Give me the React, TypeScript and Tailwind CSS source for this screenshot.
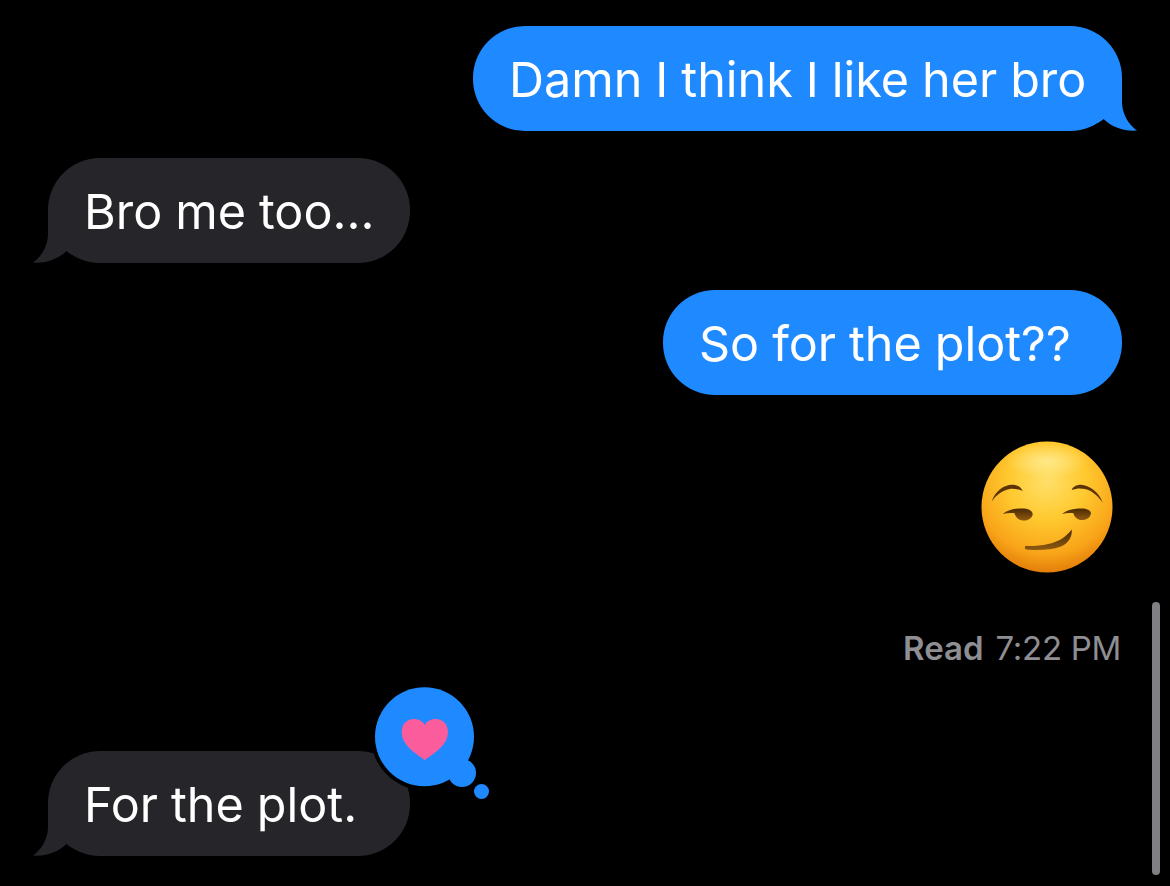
const FONT = 'font-["Inter","Liberation_Sans",sans-serif]';

function Tail({ color, side }: { color: string; side: 'left' | 'right' }) {
  return (
    <svg
      viewBox="0 0 40 50"
      className={`absolute bottom-0 h-[50px] w-[40px] ${side === 'left' ? 'left-[-15px]' : 'right-[-15px] -scale-x-100'}`}
      fill={color}
    >
      <path d="M15 0 L15 22 C14.5 34 8 44 0 49.5 C12 50.5 24 47 33.5 38 C36 40 38 41.5 40 42 L40 0 Z" />
    </svg>
  );
}

function Bubble({
  text,
  width,
  sent,
  tail,
  children,
}: {
  text: string;
  width: string;
  sent?: boolean;
  tail?: boolean;
  children?: React.ReactNode;
}) {
  return (
    <div
      className={`relative flex h-[105px] items-center rounded-[52px] pl-[36px] pt-[3px] text-[48.5px] font-[375] text-white [word-spacing:-0.7px] ${width} ${
        sent ? 'bg-[#1f8aff]' : 'bg-[#26262a]'
      }`}
    >
      {tail && <Tail color={sent ? '#1f8aff' : '#26262a'} side={sent ? 'right' : 'left'} />}
      <span className="relative whitespace-nowrap">{text}</span>
      {children}
    </div>
  );
}

function SmirkEmoji() {
  return (
    <svg viewBox="0 0 132 132" className="h-[132px] w-[132px]">
      <defs>
        <radialGradient id="face" cx="50%" cy="30%" r="74%">
          <stop offset="0%" stopColor="#ffe06a" />
          <stop offset="40%" stopColor="#ffc92f" />
          <stop offset="75%" stopColor="#f9a519" />
          <stop offset="100%" stopColor="#dd7405" />
        </radialGradient>
        <radialGradient id="shine" cx="50%" cy="50%" r="50%">
          <stop offset="0%" stopColor="#fff6b0" stopOpacity="0.6" />
          <stop offset="100%" stopColor="#fff6b0" stopOpacity="0" />
        </radialGradient>
        <linearGradient id="mark" x1="0" y1="0" x2="0" y2="1">
          <stop offset="0%" stopColor="#4a2a05" />
          <stop offset="100%" stopColor="#8f5a10" />
        </linearGradient>
      </defs>
      <circle cx="66" cy="66" r="65.5" fill="url(#face)" />
      <ellipse cx="66" cy="20" rx="42" ry="17" fill="url(#shine)" />
      <g fill="#5d3406">
        <path d="M10.7 60.7 C14 50 23 44 31 43.8 C36 43.8 40 46 41.7 50 C38 48.2 33 47.4 28.5 48 C21 49.5 15 54 10.7 60.7 Z" />
        <path d="M121.7 61.7 C118 51 108 44 100 43.8 C95 43.8 92 46 90.7 49 C95 47.3 99.5 47 104 48 C111 49.5 117 55 121.7 61.7 Z" />
      </g>
      <g fill="url(#mark)">
        <path d="M44.3 105 C60 105.5 73 103 82 97 C86 94 89 91 90.7 88.5 C91.5 96 87 102.5 80 105.5 C69 109.5 56 109.5 45 108.5 C43.8 108 43.6 106 44.3 105 Z" />
        <path d="M21.7 73 C27 68.5 36 67 43.5 67.5 C48.5 68 52 70.5 51.7 73.5 C51 77.5 46.5 80 41.5 79.5 C37 79 34.5 75.5 33.5 72.2 C29.5 71.8 25.5 72.2 21.7 73 Z" />
        <path d="M81 73 C86 68.5 95 67 102.5 67.5 C107 68 110.2 70 110 72.5 C109.5 76.5 105 79.5 100 79 C96 78.5 93 75.5 92.5 72.2 C88.5 71.8 84.5 72.2 81 73 Z" />
      </g>
    </svg>
  );
}

function Tapback() {
  return (
    <svg viewBox="0 0 128 118" className="absolute left-[323px] top-[-68px] h-[118px] w-[128px]">
      <circle cx="53.5" cy="53.7" r="53.5" fill="#000" />
      <circle cx="91" cy="90" r="18" fill="#000" />
      <circle cx="53.5" cy="53.7" r="49.5" fill="#1f8aff" />
      <circle cx="91" cy="90" r="14" fill="#1f8aff" />
      <circle cx="110.5" cy="108.5" r="7.5" fill="#1f8aff" />
      <path
        d="M53.8 77 C44 70 30.7 62 30.7 49 C30.7 41 36 36 43 36 C48 36 52 38.5 53.8 42 C55.6 38.5 59.6 36 64.6 36 C71.6 36 77 41 77 49 C77 62 63.6 70 53.8 77 Z"
        fill="#fb5c9b"
      />
    </svg>
  );
}

export default function App() {
  return (
    <div className={`relative flex h-[886px] w-[1170px] flex-col overflow-hidden bg-black pl-[48px] pr-[48px] pt-[26px] ${FONT}`}>
      <div className="self-end">
        <Bubble text="Damn I think I like her bro" width="w-[649px]" sent tail />
      </div>
      <div className="mt-[27px] self-start">
        <Bubble text="Bro me too..." width="w-[362px]" tail />
      </div>
      <div className="mt-[27px] self-end">
        <Bubble text="So for the plot??" width="w-[459px]" sent />
      </div>
      <div className="mr-[9px] mt-[46px] self-end">
        <SmirkEmoji />
      </div>
      <div className="mt-[56px] h-[38px] self-end pr-[1px] text-[33px] leading-[38px] text-[#8e8e93]">
        <span className="font-semibold">Read</span>
        <span className="ml-[12px] tracking-[-0.3px]">7:22 PM</span>
      </div>
      <div className="mt-[84px] self-start">
        <Bubble text="For the plot." width="w-[362px]" tail>
          <Tapback />
        </Bubble>
      </div>
      <div className="absolute left-[1152px] top-[602px] h-[273px] w-[8px] rounded-full bg-[#808084]" />
    </div>
  );
}
